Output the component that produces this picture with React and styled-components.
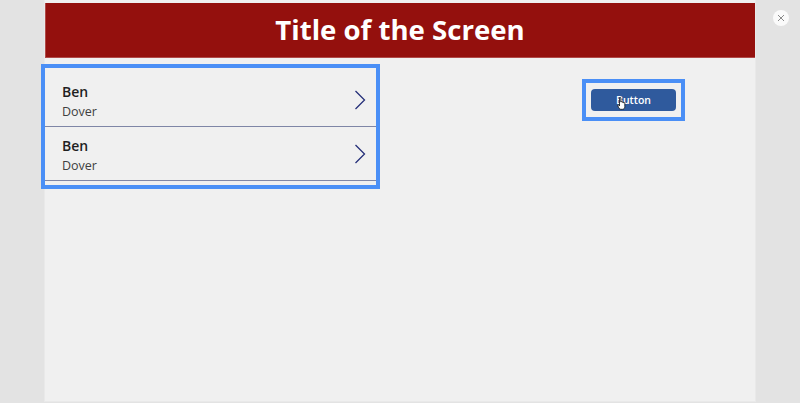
import React from "react";
import styled, { createGlobalStyle } from "styled-components";

const Global = createGlobalStyle`
  html, body { margin: 0; padding: 0; background: #e3e3e3; }
  body { font-family: "Open Sans", "Liberation Sans", sans-serif; overflow: hidden; }
`;

const Stage = styled.div`
  display: grid;
  grid-template-columns: 45px 710px 45px;
  height: 403px;
  background: #e3e3e3;
`;

const Canvas = styled.div`
  grid-column: 2;
  height: 398px;
  padding-top: 3px;
  background: #f0f0f0;
  box-shadow: 0 0 0 1px #e9e9e9;
  display: flex;
  flex-direction: column;
`;

const Header = styled.header`
  height: 55px;
  background: #94100d;
  display: flex;
  align-items: center;
  justify-content: center;
  box-shadow: inset 0 -1px 0 #b04a48, inset 1px 0 0 #b04a48;
`;

const Title = styled.h1`
  margin: 0;
  color: #ffffff;
  font-family: "Open Sans", sans-serif;
  font-weight: 700;
  font-size: 27.6px;
  line-height: 1;
  letter-spacing: 0;
  transform: translateY(-1px);
`;

const Content = styled.div`
  display: flex;
  align-items: flex-start;
  padding-top: 10px;
`;

const Gallery = styled.div`
  width: 331px;
  height: 117px;
  padding-top: 5px;
  box-sizing: border-box;
  outline: 4px solid #4a8ff6;
  overflow: hidden;
`;

const Row = styled.div`
  height: 54px;
  box-sizing: border-box;
  display: flex;
  align-items: center;
  padding: 0 10px 0 17px;
  border-bottom: 1.5px solid #7f86a6;
`;

const Texts = styled.div`
  flex: 1;
  display: flex;
  flex-direction: column;
  gap: 2px;
  margin-top: 5px;
`;

const Name = styled.div`
  font-size: 14px;
  font-weight: 600;
  color: #1f1f1f;
  line-height: 18px;
`;

const Sub = styled.div`
  font-size: 12.5px;
  font-weight: 400;
  color: #404040;
  line-height: 18px;
`;

const Chevron = styled.svg`
  width: 12px;
  height: 20px;
  flex-shrink: 0;
`;

const ButtonSelect = styled.div`
  position: relative;
  margin-left: 210px;
  margin-top: 15px;
  padding: 6px 5px;
  outline: 4px solid #4a8ff6;
`;

const ActionButton = styled.button`
  width: 85px;
  height: 22px;
  border: none;
  border-radius: 4px;
  background: #2f5a9d;
  color: #ffffff;
  font-family: "Open Sans", sans-serif;
  font-weight: 600;
  font-size: 10.5px;
  padding: 0;
  display: block;
`;

const Cursor = styled.svg`
  position: absolute;
  left: 31px;
  top: 14px;
  width: 9px;
  height: 13px;
`;

const Side = styled.div`
  grid-column: 3;
  padding: 10px 0 0 18px;
`;

const Close = styled.div`
  width: 16px;
  height: 16px;
  border-radius: 50%;
  background: #fafafa;
  display: flex;
  align-items: center;
  justify-content: center;
`;

const people = [
  { first: "Ben", last: "Dover" },
  { first: "Ben", last: "Dover" },
  { first: "", last: "" },
];

export default function App() {
  return (
    <>
      <Global />
      <Stage>
        <Canvas>
          <Header>
            <Title>Title of the Screen</Title>
          </Header>
          <Content>
            <Gallery>
              {people.map((p, i) => (
                <Row key={i}>
                  <Texts>
                    <Name>{p.first}</Name>
                    <Sub>{p.last}</Sub>
                  </Texts>
                  <Chevron viewBox="0 0 12 20">
                    <path d="M1.5 1 L10.5 10 L1.5 19" fill="none" stroke="#26307a" strokeWidth="1.3" />
                  </Chevron>
                </Row>
              ))}
            </Gallery>
            <ButtonSelect>
              <ActionButton>Button</ActionButton>
              <Cursor viewBox="0 0 9 13">
                <path
                  d="M2.5 1.2 C2.5 0.5 3.8 0.5 3.8 1.2 L3.8 5 L4.2 5 C4.2 4.3 5.4 4.3 5.4 5 L5.4 5.4 C5.4 4.8 6.6 4.8 6.6 5.5 L6.6 6 C6.6 5.4 7.8 5.4 7.8 6.2 L7.8 9.5 C7.8 11 7 12.3 5.5 12.3 L4 12.3 C3 12.3 2.4 11.7 1.8 10.8 L0.7 8.6 C0.4 7.9 1.2 7.4 1.7 8 L2.5 9 Z"
                  fill="#ffffff"
                  stroke="#111"
                  strokeWidth="0.8"
                />
              </Cursor>
            </ButtonSelect>
          </Content>
        </Canvas>
        <Side>
          <Close>
            <svg width="8" height="8" viewBox="0 0 8 8">
              <path d="M1 1 L7 7 M7 1 L1 7" stroke="#8a8a8a" strokeWidth="1" />
            </svg>
          </Close>
        </Side>
      </Stage>
    </>
  );
}
